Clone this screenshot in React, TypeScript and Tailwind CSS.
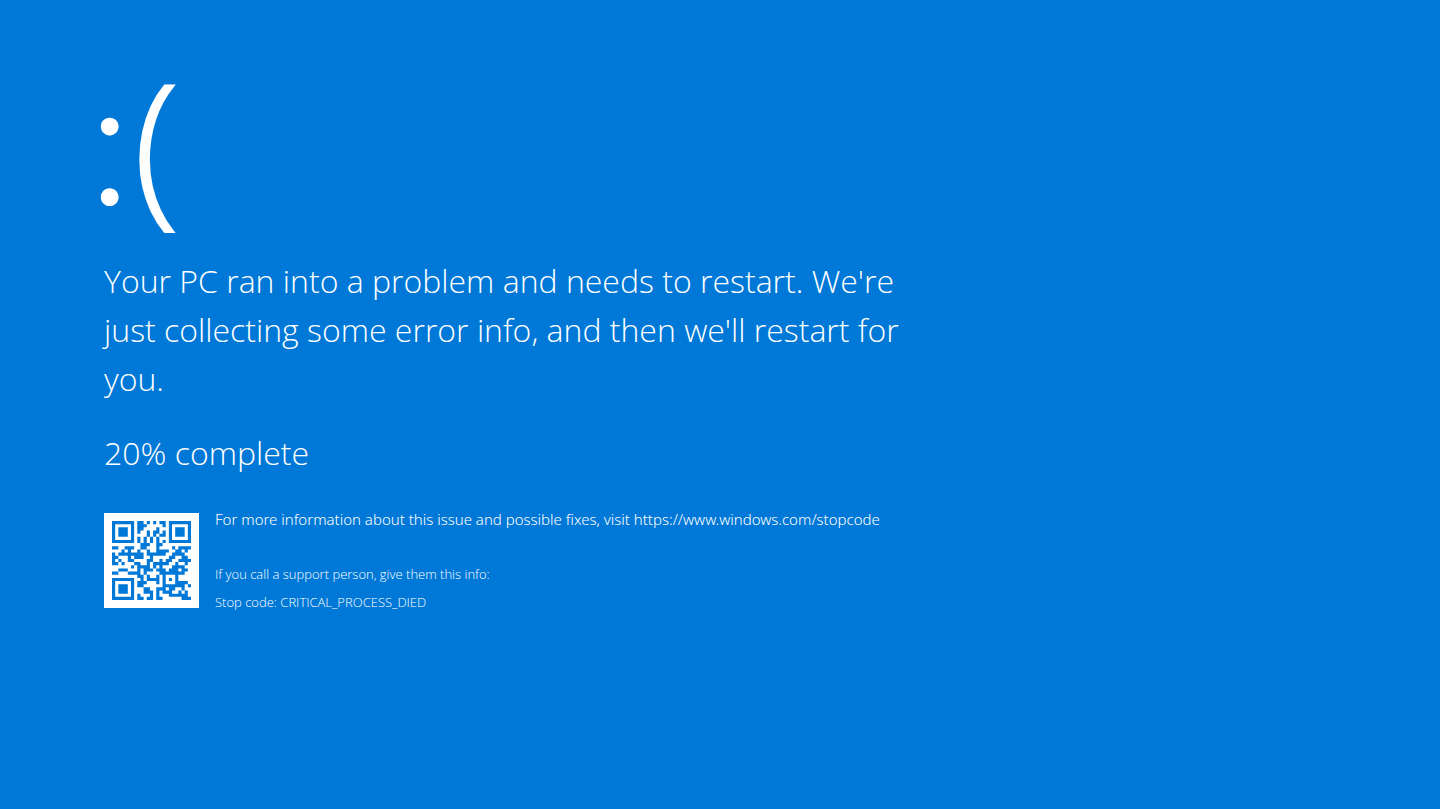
const STOP_URL = "https://www.windows.com/stopcode";

// version 2 QR code for STOP_URL, one string per row
const QR_ROWS = [
  "#######.##.#.#.##.#######",
  "#.....#.###.....#.#.....#",
  "#.###.#.##....#...#.###.#",
  "#.###.#.#..#.##.#.#.###.#",
  "#.###.#....#.#.##.#.###.#",
  "#.....#.#.#.#.#...#.....#",
  "#######.#.#.#.#.#.#######",
  ".........###..##.........",
  "##..###..##...#....#.####",
  "...#.#..#..#..####..##.#.",
  "#.########.######..####..",
  "##...#.###..#.....##..##.",
  "#.#..##....##..#.##..####",
  "##.#...##..#.#####..#..#.",
  "......#.####.#.#...####..",
  "..###...#.###.###.###.##.",
  "##...####.#....########..",
  "........##.#..#.#...#....",
  "#######..#.####.#.#.#....",
  "#.....#.###...#.#...####.",
  "#.###.#.##......#######.#",
  "#.###.#...##..###.##..#..",
  "#.###.#...###.#.###..#.#.",
  "#.....#.#...#.#...######.",
  "#######.##.##.##......###",
];

function QrCode() {
  const d = QR_ROWS.flatMap((row, y) =>
    [...row].map((cell, x) => (cell === "#" ? `M${x} ${y}h1v1h-1z` : "")),
  ).join("");

  return (
    <div className="size-[95px] shrink-0 bg-white p-2">
      <svg viewBox="0 0 25 25" className="block size-full" role="img" aria-label="Stop code QR">
        <path d={d} fill="#0078d7" />
      </svg>
    </div>
  );
}

export default function App() {
  const progress = 20;

  return (
    <main className="min-h-screen bg-[#0078d7] px-26 py-10 font-['Open_Sans',sans-serif] font-light text-white">
      <div className="max-w-[820px]">
        <p className="-ml-[18px] text-[168px] leading-[200px]">
          <span className="font-['Inter',sans-serif]">:</span>
          <span className="[-webkit-text-stroke:2px_white]">(</span>
        </p>

        <h1 className="mt-3 text-[32px] leading-[49px]">
          Your PC ran into a problem and needs to restart. We're just collecting some error info, and then we'll restart for you.
        </h1>
        <p className="mt-[25px] text-[32px] leading-[49px]">{progress}% complete</p>

        <div className="mt-9 flex gap-4">
          <QrCode />
          <div className="flex flex-col justify-between">
            <p className="font-['Noto_Sans',sans-serif] text-[15px] leading-3">
              For more information about this issue and possible fixes, visit <a href={STOP_URL}>{STOP_URL}</a>
            </p>
            <div className="flex flex-col gap-4 text-[13px] leading-3">
              <p>If you call a support person, give them this info:</p>
              <p>Stop code: CRITICAL_PROCESS_DIED</p>
            </div>
          </div>
        </div>
      </div>
    </main>
  );
}
